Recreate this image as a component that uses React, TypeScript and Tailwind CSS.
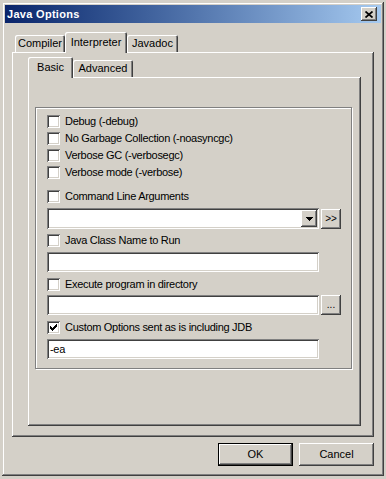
import { ReactNode } from "react";

const windowBevel =
  "shadow-[inset_-1px_-1px_0_#404040,inset_1px_1px_0_#d4d0c8,inset_-2px_-2px_0_#808080,inset_2px_2px_0_#ffffff]";
const raised =
  "shadow-[inset_-1px_-1px_0_#404040,inset_1px_1px_0_#ffffff,inset_-2px_-2px_0_#808080]";
const sunken =
  "shadow-[inset_1px_1px_0_#808080,inset_-1px_-1px_0_#ffffff,inset_2px_2px_0_#404040,inset_-2px_-2px_0_#d4d0c8]";
const tabBevel =
  "shadow-[inset_1px_1px_0_#ffffff,inset_-1px_0_0_#404040,inset_-2px_0_0_#808080]";

type TabProps = {
  label: string;
  width: string;
  selected?: boolean;
};

function Tab({ label, width, selected }: TabProps) {
  return (
    <div
      className={`${width} ${tabBevel} ${
        selected ? "h-[21px] -mb-px relative z-10 bg-[#d4d0c8]" : "h-[17px]"
      } rounded-t-[2px] flex items-center justify-center`}
    >
      {label}
    </div>
  );
}

function Check({ checked }: { checked?: boolean }) {
  return (
    <div className={`w-[13px] h-[13px] bg-white ${sunken} flex items-center justify-center shrink-0`}>
      {checked && (
        <svg width="7" height="7" viewBox="0 0 7 7" shapeRendering="crispEdges">
          <polygon points="0,2 2,4 7,-1 7,2 2,7 0,5" fill="#000" />
        </svg>
      )}
    </div>
  );
}

function CheckRow({ label, checked, className = "" }: { label: string; checked?: boolean; className?: string }) {
  return (
    <div className={`h-[17px] flex items-center gap-[5px] ${className}`}>
      <Check checked={checked} />
      <span className="tracking-[-0.3px] leading-none">{label}</span>
    </div>
  );
}

function Field({ className = "", children }: { className?: string; children?: ReactNode }) {
  return (
    <div className={`w-[272px] h-[20px] bg-white ${sunken} pl-[3px] flex items-center ${className}`}>
      {children}
    </div>
  );
}

function SmallButton({ children }: { children: ReactNode }) {
  return (
    <div className={`w-[20px] h-[20px] ml-[2px] ${raised} flex items-center justify-center text-[10px] leading-none`}>
      {children}
    </div>
  );
}

export default function App() {
  return (
    <div className="w-[386px] h-[479px] bg-[#d4d0c8] pt-[2px] pl-[2px] font-['Liberation_Sans',Arial,sans-serif] text-[11px] text-black select-none">
      <div className={`w-[382px] h-[474px] p-[3px] flex flex-col ${windowBevel}`}>
        {/* title bar */}
        <div className="h-[18px] shrink-0 flex items-center bg-gradient-to-r from-[#0a246a] to-[#a6caf0] pl-[2px] pr-[4px]">
          <span className="flex-1 font-bold text-white tracking-[0.3px]">Java Options</span>
          <div className={`w-[16px] h-[14px] bg-[#d4d0c8] ${raised} flex items-center justify-center`}>
            <svg width="8" height="7" viewBox="0 0 8 7">
              <path d="M0.5 0.5 L7.5 6.5 M7.5 0.5 L0.5 6.5" stroke="#000" strokeWidth="1.7" />
            </svg>
          </div>
        </div>

        <div className="flex-1 flex flex-col pt-[9px] px-[7px]">
          {/* outer tabs */}
          <div className="h-[20px] flex items-end pl-[3px]">
            <Tab label="Compiler" width="w-[50px]" />
            <Tab label="Interpreter" width="w-[62px]" selected />
            <Tab label="Javadoc" width="w-[51px]" />
          </div>

          <div className={`h-[385px] ${raised} pt-[5px] pl-[16px]`}>
            {/* inner tabs */}
            <div className="h-[20px] flex items-end">
              <Tab label="Basic" width="w-[45px]" selected />
              <Tab label="Advanced" width="w-[60px]" />
            </div>

            <div className={`w-[333px] h-[349px] ${raised} pt-[30px] pl-[7px]`}>
              <div className="w-[317px] h-[262px] border border-[#808080] shadow-[1px_1px_0_#ffffff,inset_1px_1px_0_#ffffff] pl-[11px] pt-[5px] flex flex-col">
                <CheckRow label="Debug (-debug)" />
                <CheckRow label="No Garbage Collection (-noasyncgc)" />
                <CheckRow label="Verbose GC (-verbosegc)" />
                <CheckRow label="Verbose mode (-verbose)" />

                <CheckRow label="Command Line Arguments" className="mt-[7px]" />
                <div className="mt-[3px] flex items-center">
                  <div className={`w-[272px] h-[21px] bg-white ${sunken} p-[2px] flex justify-end`}>
                    <div className={`w-[16px] h-[17px] bg-[#d4d0c8] ${raised} flex items-center justify-center`}>
                      <svg width="7" height="4" viewBox="0 0 7 4" shapeRendering="crispEdges">
                        <polygon points="0,0 7,0 3.5,4" fill="#000" />
                      </svg>
                    </div>
                  </div>
                  <SmallButton>&gt;&gt;</SmallButton>
                </div>

                <CheckRow label="Java Class Name to Run" className="mt-[3px]" />
                <Field className="mt-[3px]" />

                <CheckRow label="Execute program in directory" className="mt-[4px]" />
                <div className="mt-[2px] flex items-center">
                  <Field />
                  <SmallButton>...</SmallButton>
                </div>

                <CheckRow label="Custom Options sent as is including JDB" checked className="mt-[4px]" />
                <Field className="mt-[3px]">
                  <span className="tracking-[-0.3px]">-ea</span>
                </Field>
              </div>
            </div>
          </div>

          {/* dialog buttons */}
          <div className="mt-[6px] flex justify-end gap-[6px]">
            <div className="w-[75px] h-[23px] border border-black bg-[#d4d0c8]">
              <div className={`w-full h-full ${raised} flex items-center justify-center`}>OK</div>
            </div>
            <div className={`w-[75px] h-[23px] ${raised} flex items-center justify-center`}>Cancel</div>
          </div>
        </div>
      </div>
    </div>
  );
}
